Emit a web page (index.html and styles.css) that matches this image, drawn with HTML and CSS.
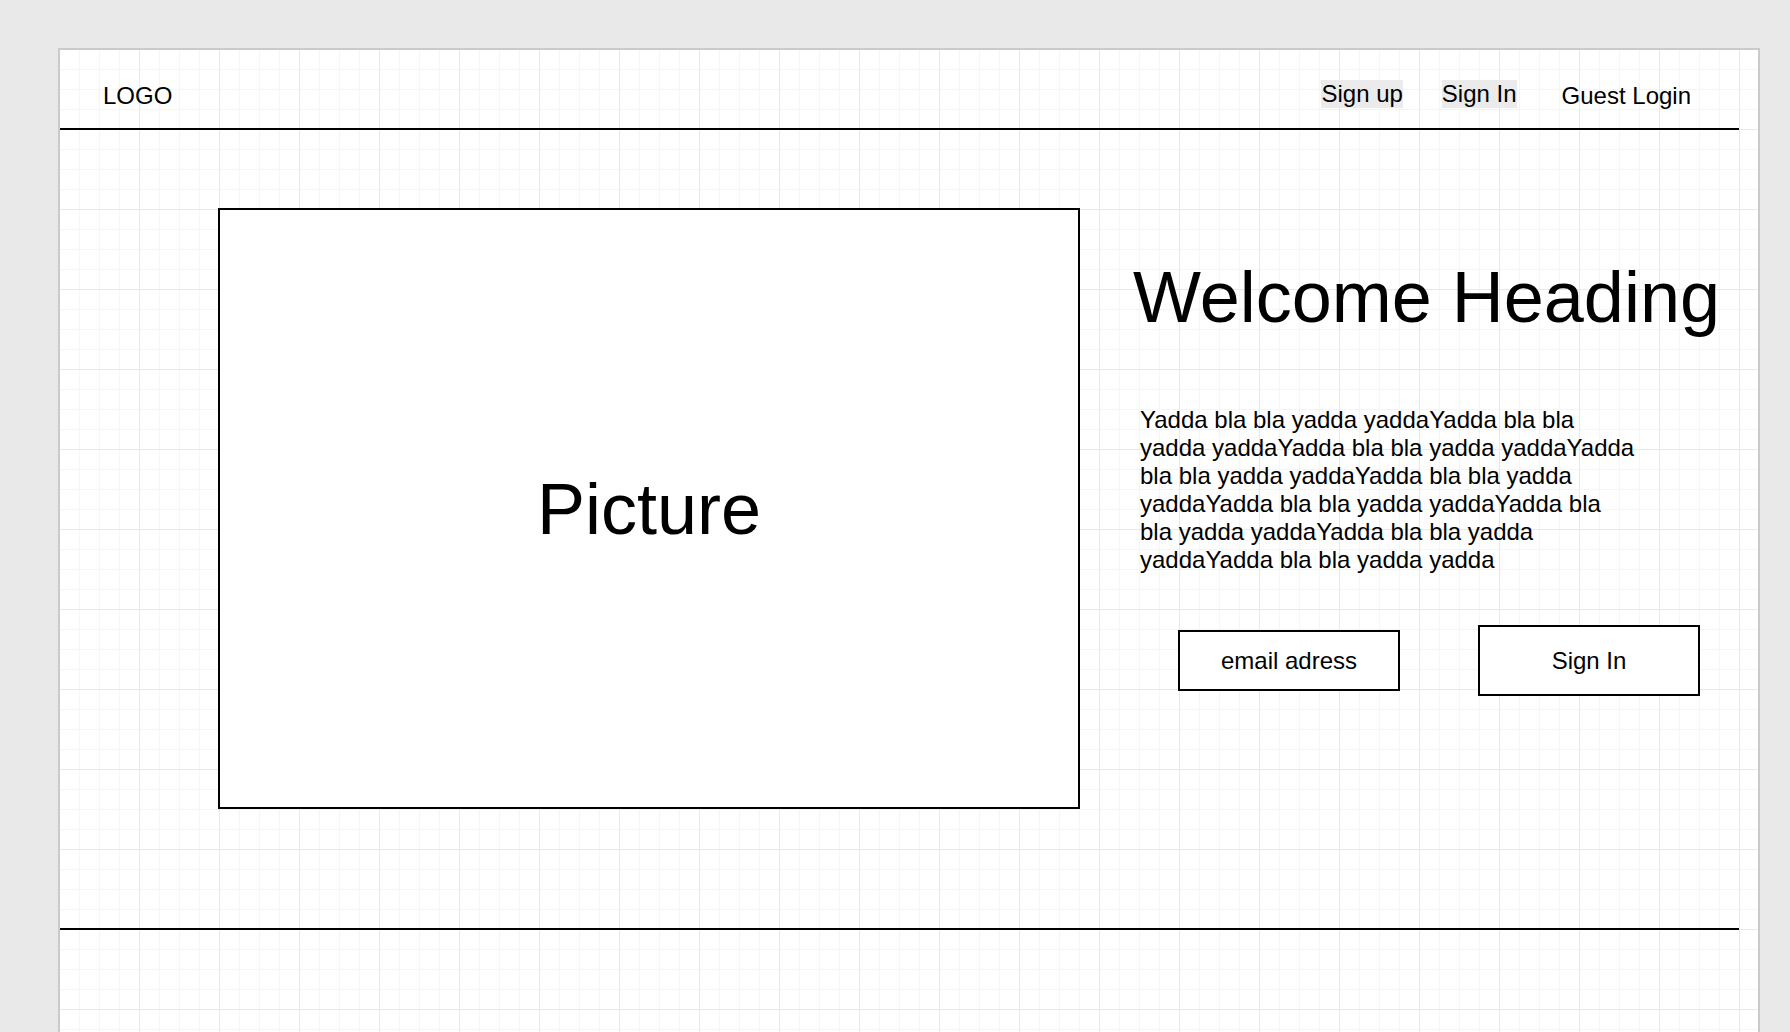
FILE: index.html
```html
<!DOCTYPE html>
<html lang="en">
<head>
<meta charset="utf-8">
<title>Wireframe</title>
<link rel="stylesheet" href="styles.css">
</head>
<body>
<div class="canvas">
  <header class="header">
    <div class="logo">LOGO</div>
    <nav class="nav">
      <span class="nav-link nav-signup">Sign up</span>
      <span class="nav-link nav-signin">Sign In</span>
      <span class="nav-link nav-guest">Guest Login</span>
    </nav>
  </header>
  <main class="main">
    <div class="picture">Picture</div>
    <section class="intro">
      <h1 class="heading">Welcome Heading</h1>
      <p class="text">Yadda bla bla yadda yaddaYadda bla bla<br>yadda yaddaYadda bla bla yadda yaddaYadda<br>bla bla yadda yaddaYadda bla bla yadda<br>yaddaYadda bla bla yadda yaddaYadda bla<br>bla yadda yaddaYadda bla bla yadda<br>yaddaYadda bla bla yadda yadda</p>
      <div class="actions">
        <div class="email">email adress</div>
        <div class="signin-btn">Sign In</div>
      </div>
    </section>
  </main>
  <footer class="footer"></footer>
</div>
</body>
</html>
```

FILE: styles.css
```css
html, body {
  margin: 0;
  padding: 0;
}

body {
  background: #e9e9e9;
  font-family: "Liberation Sans", Arial, Helvetica, sans-serif;
  color: #000;
  overflow: hidden;
  height: 1032px;
}

.canvas {
  box-sizing: border-box;
  margin-left: 58px;
  margin-top: 48px;
  width: 1702px;
  height: 1010px;
  border: 2px solid #cacaca;
  border-bottom: none;
  background-color: #fff;
  background-image:
    linear-gradient(to right, #e8e8e8 1px, transparent 1px),
    linear-gradient(to bottom, #e8e8e8 1px, transparent 1px),
    linear-gradient(to right, #f5f5f5 1px, transparent 1px),
    linear-gradient(to bottom, #f5f5f5 1px, transparent 1px);
  background-size: 80px 80px, 80px 80px, 20px 20px, 20px 20px;
  background-position: -1px -1px, -1px -1px, -1px -1px, -1px -1px;
}

.header {
  box-sizing: border-box;
  width: 1679px;
  height: 80px;
  border-bottom: 2px solid #000;
  display: flex;
  align-items: flex-start;
  padding-top: 32px;
  padding-left: 43px;
  font-size: 24px;
  line-height: 28px;
}

.logo {
  margin-right: auto;
}

.nav {
  display: flex;
  align-items: flex-start;
  margin-right: 48px;
}

.nav-link {
  display: block;
  white-space: nowrap;
}

.nav-signup {
  margin-top: -2px;
  background: #ebebeb;
}

.nav-signin {
  margin-top: -2px;
  margin-left: 39px;
  background: #ebebeb;
}

.nav-guest {
  margin-top: 0;
  margin-left: 45px;
}

.main {
  box-sizing: border-box;
  height: 798px;
  display: flex;
  align-items: flex-start;
  padding-left: 158px;
  padding-top: 78px;
}

.picture {
  box-sizing: border-box;
  flex: none;
  width: 862px;
  height: 601px;
  border: 2px solid #000;
  background: #fff;
  display: flex;
  align-items: center;
  justify-content: center;
  font-size: 72px;
  line-height: 80px;
}

.intro {
  margin-left: 53px;
  display: flex;
  flex-direction: column;
  align-items: flex-start;
}

.heading {
  margin: 49px 0 0 0;
  font-weight: normal;
  font-size: 72px;
  line-height: 80px;
  white-space: nowrap;
}

.text {
  margin: 69px 0 0 7px;
  font-size: 24px;
  line-height: 28px;
  white-space: nowrap;
}

.actions {
  margin: 51px 0 0 45px;
  display: flex;
  align-items: center;
  gap: 78px;
  font-size: 24px;
  line-height: 28px;
}

.email,
.signin-btn {
  box-sizing: border-box;
  width: 222px;
  border: 2px solid #000;
  background: #fff;
  display: flex;
  align-items: center;
  justify-content: center;
}

.email {
  height: 61px;
}

.signin-btn {
  height: 71px;
}

.footer {
  width: 1679px;
  border-top: 2px solid #000;
}
```
